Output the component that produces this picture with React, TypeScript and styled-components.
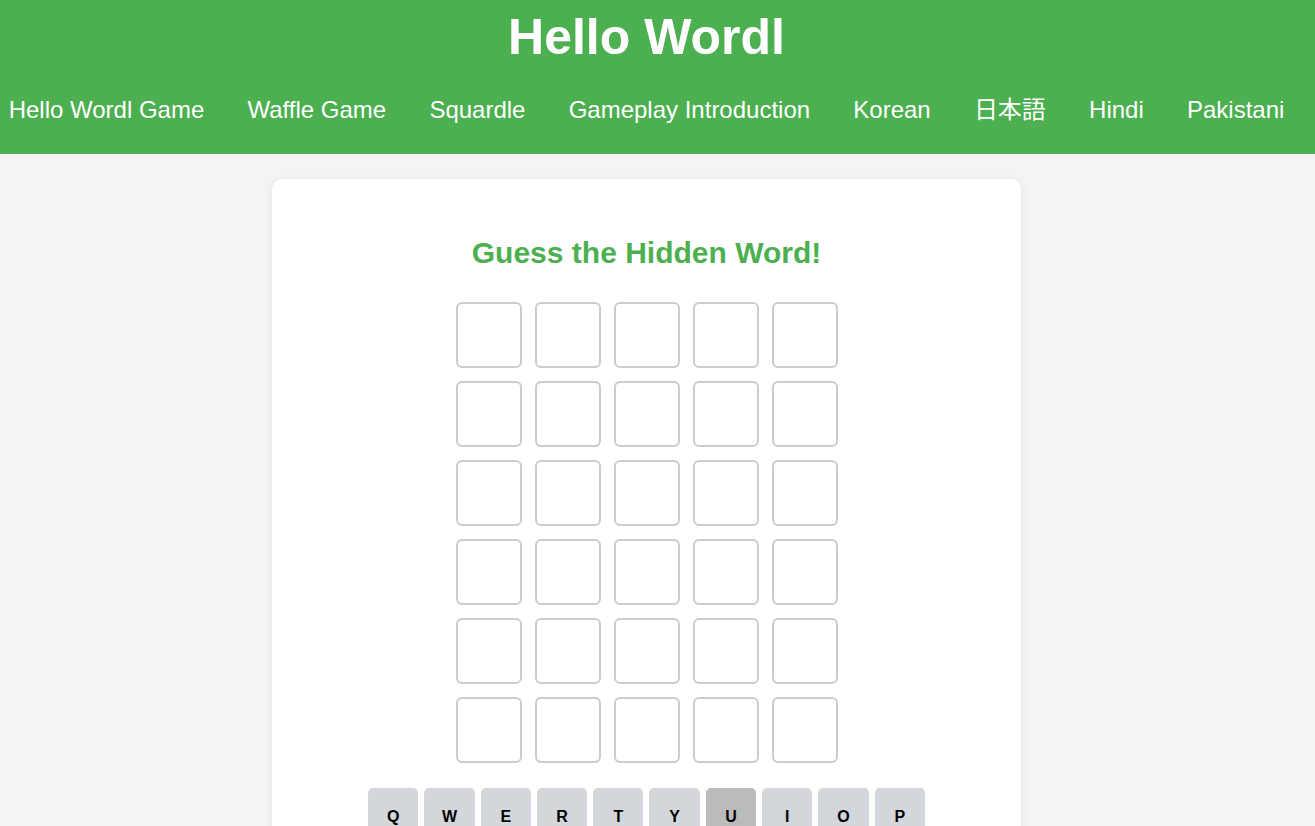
import React from "react";
import styled, { createGlobalStyle } from "styled-components";

const NAV_LINKS = [
  "Hello Wordl Game",
  "Waffle Game",
  "Squardle",
  "Gameplay Introduction",
  "Korean",
  "日本語",
  "Hindi",
  "Pakistani",
];

const KEYS = ["Q", "W", "E", "R", "T", "Y", "U", "I", "O", "P"];
const ROWS = 6;
const COLS = 5;

export default function App() {
  return (
    <>
      <GlobalStyle />
      <Header>
        <HeaderInner>
          <Title>Hello Wordl</Title>
          <Nav>
            {NAV_LINKS.map((link) => (
              <NavLink key={link} href="#">
                {link}
              </NavLink>
            ))}
          </Nav>
        </HeaderInner>
      </Header>

      <Main>
        <Card>
          <Heading>Guess the Hidden Word!</Heading>
          <Board>
            {Array.from({ length: ROWS * COLS }).map((_, i) => (
              <Tile key={i} />
            ))}
          </Board>
          <KeyRow>
            {KEYS.map((k) => (
              <Key key={k} $active={k === "U"}>
                {k}
              </Key>
            ))}
          </KeyRow>
        </Card>
      </Main>
    </>
  );
}

/**
 * Styles
 */
const GlobalStyle = createGlobalStyle`
  html, body {
    margin: 0;
    padding: 0;
    background: #f3f4f6;
    font-family: "Liberation Sans", Arial, "Noto Sans CJK JP", sans-serif;
    overflow: hidden;
  }
`;

const Header = styled.header`
  background: #4caf50;
  color: #fff;
  padding: 9px 0 30px;
`;

const HeaderInner = styled.div`
  width: 1293px;
`;

const Title = styled.h1`
  margin: 0;
  text-align: center;
  font-size: 50px;
  line-height: 57px;
  font-weight: 700;
`;

const Nav = styled.nav`
  margin-top: 30px;
  display: flex;
  justify-content: center;
`;

const NavLink = styled.a`
  flex-shrink: 0;
  padding: 0 21.6px;
  color: #fff;
  text-decoration: none;
  font-size: 24px;
  line-height: 28px;
  white-space: nowrap;
`;

const Main = styled.main`
  width: 1293px;
  padding-top: 25px;
`;

const Card = styled.section`
  width: 749px;
  margin: 0 auto;
  box-sizing: border-box;
  background: #fff;
  border-radius: 10px;
  box-shadow: 0 2px 10px rgba(0, 0, 0, 0.08);
  padding: 56px 0 40px;
  display: flex;
  flex-direction: column;
  align-items: center;
`;

const Heading = styled.h2`
  margin: 0 0 32px;
  color: #4caf50;
  font-size: 30px;
  line-height: 35px;
  font-weight: 700;
`;

const Board = styled.div`
  display: grid;
  grid-template-columns: repeat(${COLS}, 66px);
  grid-auto-rows: 66px;
  gap: 13px;
`;

const Tile = styled.div`
  box-sizing: border-box;
  border: 2px solid #cccccc;
  border-radius: 6px;
  background: #fff;
`;

const KeyRow = styled.div`
  margin-top: 25px;
  width: 557px;
  display: flex;
  gap: 6px;
`;

const Key = styled.button<{ $active: boolean }>`
  flex: 1;
  height: 58px;
  border: none;
  border-radius: 5px;
  padding: 0;
  background: ${({ $active }) => ($active ? "#bbbbbb" : "#d3d6da")};
  color: #000;
  font-family: inherit;
  font-size: 16px;
  font-weight: 700;
  cursor: pointer;
`;
